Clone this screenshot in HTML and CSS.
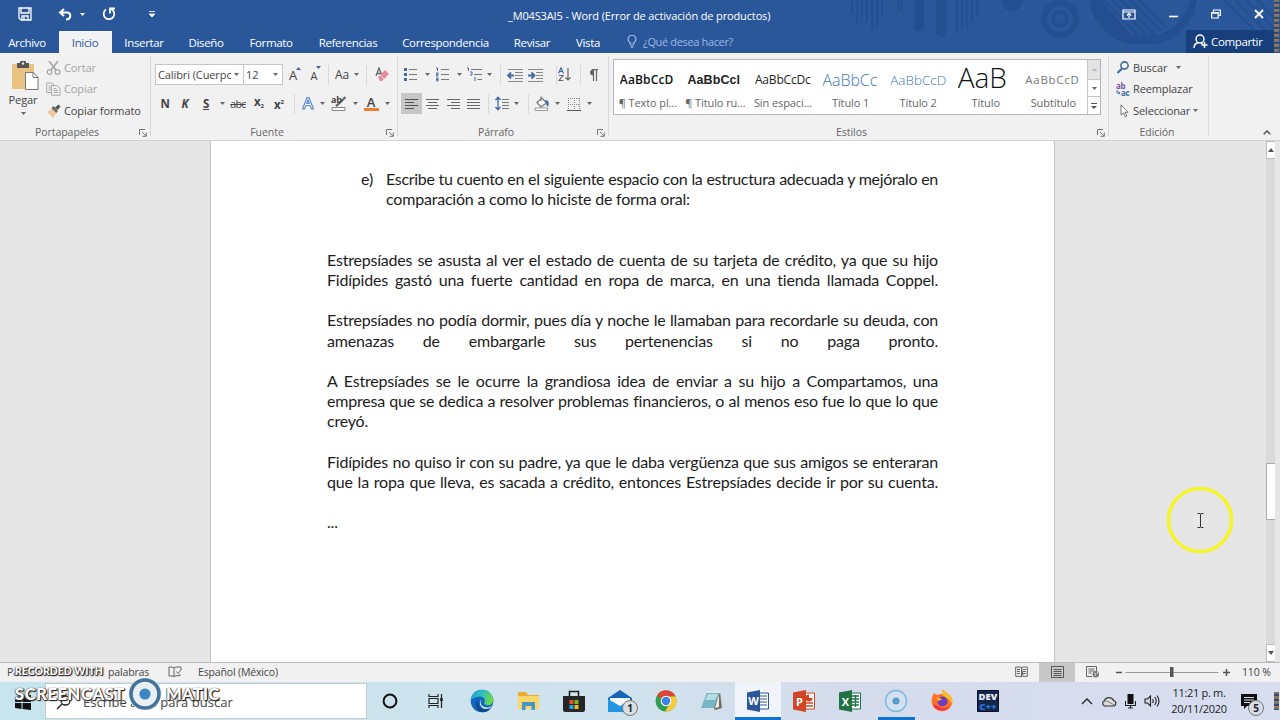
FILE: index.html
```html
<!DOCTYPE html>
<html lang="es">
<head>
<meta charset="utf-8">
<title>_M04S3AI5 - Word</title>
<link rel="stylesheet" href="styles.css">
</head>
<body>
<svg class="defs" width="0" height="0">
  <symbol id="caret" viewBox="0 0 5 3"><path d="M0 0h5L2.500 3z" fill="#666"/></symbol>
  <symbol id="launch" viewBox="0 0 8 8"><path d="M.5 6V.5H6M3 3l4 4M7.300 3.500v3.800H3.500" fill="none" stroke="#777"/></symbol>
</svg>
<div class="app">
  <header class="top">
    <svg class="pattern" width="440" height="53" viewBox="835 0 440 53">
      <g stroke="#234f90" stroke-width="2" fill="none"><path d="M852 0v14M857 0v24M862 0v19M867 0v22M872 0v30M877 0v26M882 0v15M957 0v32M962 0v30M967 0v27M972 0v22M977 0v16"/></g>
      <path d="M900 0v11" stroke="#265292" stroke-width="6"/><path d="M919 0v26M941 0v32" stroke="#234e8f" stroke-width="10" stroke-linecap="round"/>
      <circle cx="1012" cy="0" r="11" fill="#234e8f"/>
      <circle cx="1060" cy="19" r="16" fill="none" stroke="#244f90" stroke-width="6"/><circle cx="1060" cy="19" r="7" fill="none" stroke="#244f90" stroke-width="4"/>
      <path d="M1089 0a52 52 0 0 0 40 44h28a52 52 0 0 0 40-44h-7a45 45 0 0 1-33 35h-26L1101 0z" fill="#234e8f"/>
      <path d="M1103 0l40 40M1112 0l37 38M1121 0l34 35M1130 0l31 31M1139 0l28 28M1224 0l50 50M1235 0l40 40M1246 0l29 29M1257 0l18 18" stroke="#255091" stroke-width="3"/>
    </svg>
    <div class="titlebar">
      <div class="quick">
        <svg width="14" height="14" viewBox="0 0 14 14"><path d="M1 1h12v12H3L1 11zM3 1v5h8V1M4 13V9h6v4M6 10v3" fill="none" stroke="#fff" stroke-width="1.300"/></svg>
        <svg width="14" height="13" viewBox="0 0 14 13"><path d="M6 1L2 4.500 6 8M2 4.500h7c5 0 4 7-1 7" fill="none" stroke="#fff" stroke-width="2"/></svg>
        <svg width="5" height="3" viewBox="0 0 5 3"><path d="M0 0h5L2.500 3z" fill="#fff"/></svg>
        <svg width="14" height="14" viewBox="0 0 14 14"><path d="M4 2.500A5.300 5.300 0 1 0 9.500 2.200M8 6.500V1.500h5" fill="none" stroke="#fff" stroke-width="1.800"/></svg>
        <svg width="6" height="6" viewBox="0 0 6 6"><path d="M0 .5h6M0 3h6L3 6z" stroke="#fff" stroke-width=".8" fill="#fff"/></svg>
      </div>
      <h1 class="title">_M04S3AI5 - Word (Error de activación de productos)</h1>
      <div class="winbtns">
        <svg width="14" height="11" viewBox="0 0 14 11"><path d="M1 1h12v9H1zM1 3h12M7 9V4.500M4.800 6.500L7 4.300l2.200 2.200" fill="none" stroke="#fff" stroke-width="1.200"/></svg>
        <svg width="9" height="11" viewBox="0 0 9 11"><path d="M0 7.500h9" stroke="#fff" stroke-width="1.600"/></svg>
        <svg width="10" height="10" viewBox="0 0 10 10"><path d="M.7 3.500h6.500V9H.7zM2.500 3V1h6.800v5.500H7.500M.7 4.200h6.500" fill="none" stroke="#fff" stroke-width="1.200"/></svg>
        <svg width="10" height="10" viewBox="0 0 10 10"><path d="M1 1l8 8M9 1L1 9" stroke="#fff" stroke-width="1.900"/></svg>
      </div>
    </div>
    <nav class="tabs">
      <span class="tab">Archivo</span><span class="tab active">Inicio</span><span class="tab">Insertar</span><span class="tab">Diseño</span><span class="tab">Formato</span><span class="tab">Referencias</span><span class="tab">Correspondencia</span><span class="tab">Revisar</span><span class="tab">Vista</span>
      <span class="tell"><svg width="10" height="13" viewBox="0 0 10 13"><path d="M3 9V7.500a3.900 3.900 0 1 1 4 0V9zM3 11h4M4 12.500h2" fill="none" stroke="#9db8e0" stroke-width="1.200"/></svg>¿Qué desea hacer?</span>
      <span class="share"><svg width="15" height="15" viewBox="0 0 15 15"><circle cx="7" cy="5" r="4" fill="none" stroke="#fff" stroke-width="1.400"/><path d="M1 14c0-3 2-5 4.500-5.300M8 9l1.500 1M11.500 8v6M8.500 11h6" fill="none" stroke="#fff" stroke-width="1.400"/></svg>Compartir</span>
      <i class="glitch"></i>
    </nav>
  </header>

  <section class="ribbon">
    <div class="group g-clip">
      <div class="paste">
        <svg width="28" height="30" viewBox="0 0 28 30"><path d="M1 3h22v25H1z" fill="#eac282"/><path d="M6 2h3a3 3 0 0 1 6 0h3v5H6z" fill="#555"/><circle cx="12" cy="2.500" r="1.200" fill="#eee"/><path d="M14.500 11.500h8l4.500 5v12H14.500z" fill="#fff" stroke="#777"/><path d="M22 11.500v5h5" fill="none" stroke="#777"/></svg>
        <span>Pegar</span>
        <svg class="caret"><use href="#caret"/></svg>
      </div>
      <div class="cliplist">
        <div class="off"><svg width="16" height="14" viewBox="0 0 16 14"><path d="M3 0l7 9M12 0L5 9" stroke="#a8a8a8" stroke-width="1.800"/><circle cx="3.500" cy="11" r="2.300" fill="none" stroke="#a8a8a8" stroke-width="1.300"/><circle cx="11.500" cy="11" r="2.300" fill="none" stroke="#a8a8a8" stroke-width="1.300"/></svg>Cortar</div>
        <div class="off"><svg width="16" height="14" viewBox="0 0 16 14"><path d="M5 10.500H.7V1H6l2 2M5.500 3.500H11l3 3v6.800H5.500zM2.500 4h2M2.500 6h2M2.500 8h2M7.500 6.500h3M7.500 8.500h4.500M7.500 10.500h4.500" fill="none" stroke="#aaa"/></svg>Copiar</div>
        <div><svg width="16" height="14" viewBox="0 0 16 14"><path d="M1 8l5-3.500L10.500 9 7 14z" fill="#f0c79a"/><path d="M5.500 4l2-2L12 7l-1.700 2z" fill="#666"/><path d="M9 3.500L12.500.5l2 2L11.500 6z" fill="#555"/></svg>Copiar formato</div>
      </div>
      <div class="glabel">Portapapeles</div><svg class="launch"><use href="#launch"/></svg>
    </div>

    <div class="group g-font">
      <div class="row font1">
        <div class="combo"><span class="cut">Calibri (Cuerpo)</span><svg class="caret"><use href="#caret"/></svg></div>
        <div class="combo"><span>12</span><svg class="caret"><use href="#caret"/></svg></div>
        <span class="grow">A<svg width="5" height="3" viewBox="0 0 5 3"><path d="M0 3h5L2.500 0z" fill="#41699f"/></svg></span>
        <span class="grow small">A<svg width="5" height="3" viewBox="0 0 5 3"><path d="M0 0h5L2.500 3z" fill="#41699f"/></svg></span>
        <i class="sep"></i>
        <span class="aa">Aa</span><svg class="caret"><use href="#caret"/></svg>
        <i class="sep"></i>
        <svg width="14" height="15" viewBox="0 0 14 15"><path d="M1 9l3-8 3 8M2 6.500h4" fill="none" stroke="#666" stroke-width="1.300"/><path d="M3 10l7-7 4 4-7 7H5z" fill="#e58a9b"/><path d="M5 8l4 4" stroke="#fff" stroke-width=".8"/></svg>
      </div>
      <div class="row font2">
        <b>N</b><b><i>K</i></b><b><u>S</u></b><svg class="caret"><use href="#caret"/></svg><s>abc</s><b class="sub">x<small>2</small></b><b class="sup">x<small>2</small></b><i class="sep"></i>
        <svg width="14" height="15" viewBox="0 0 14 15"><path d="M1.500 13L6 1.500h2L12.500 13h-2L9 9.500H5L3.500 13zM5.700 7.500h2.600L7 4z" fill="#fff" stroke="#5b8bc9" stroke-width="1.200"/></svg><svg class="caret"><use href="#caret"/></svg>
        <span class="marker"><em>ab</em><svg width="16" height="15" viewBox="0 0 16 15"><path d="M14.500 1L7 8.500l-2 1.500" stroke="#666" stroke-width="2.200" fill="none"/><path d="M1 11.500h13v3H1z" fill="#fff" stroke="#888"/></svg></span><svg class="caret"><use href="#caret"/></svg>
        <span class="acolor">A</span><svg class="caret"><use href="#caret"/></svg>
      </div>
      <div class="glabel">Fuente</div><svg class="launch"><use href="#launch"/></svg>
    </div>

    <div class="group g-para">
      <div class="row para1">
        <svg width="14" height="15" viewBox="0 0 14 15"><path d="M0 1h3v3H0zM0 6h3v3H0zM0 11h3v3H0z" fill="#41699f"/><path d="M5 2.500h8M5 7.500h8M5 12.500h8" stroke="#777"/></svg><svg class="caret"><use href="#caret"/></svg>
        <svg width="14" height="15" viewBox="0 0 14 15"><path d="M0 1h1.500v3M0 6h2v1.500H0V9h2.500M0 11h2v3H0M0 12.500h2" fill="none" stroke="#41699f"/><path d="M5 2.500h8M5 7.500h8M5 12.500h8" stroke="#777"/></svg><svg class="caret"><use href="#caret"/></svg>
        <svg width="16" height="15" viewBox="0 0 16 15"><path d="M0 1h1.500v3M3 5h2v3H3M8 10v4" fill="none" stroke="#41699f"/><path d="M4 2.500h11M7 7.500h8M10.500 12.500H15" stroke="#777"/></svg><svg class="caret"><use href="#caret"/></svg>
        <i class="sep"></i>
        <svg width="16" height="14" viewBox="0 0 16 14"><path d="M1 1.500h15M8 4.500h8M8 7.500h8M8 10.500h8M1 13.500h15" stroke="#888"/><path d="M7 7.500H1.500M4 4.500l-3 3 3 3" stroke="#41699f" stroke-width="1.800" fill="none"/></svg>
        <svg width="16" height="14" viewBox="0 0 16 14"><path d="M0 1.500h15M8 4.500h7M8 7.500h7M8 10.500h7M0 13.500h15" stroke="#888"/><path d="M0 7.500h6M3.500 4.500l3 3-3 3" stroke="#41699f" stroke-width="1.800" fill="none"/></svg>
        <i class="sep"></i>
        <svg width="13" height="15" viewBox="0 0 13 15"><path d="M.5 6.500L3 .8l2.500 5.700M1.300 4.500h3.400" fill="none" stroke="#41699f" stroke-width="1.200"/><path d="M1 8.500h4L1 13.500h4.300M10 1v12M7.500 10.500L10 13l2.500-2.500" fill="none" stroke="#666" stroke-width="1.200"/></svg>
        <i class="sep"></i>
        <svg width="11" height="12" viewBox="0 0 11 12"><path d="M5 6.500a3 3 0 0 1 0-6z" fill="#666"/><path d="M4 .7h6M5.500 1v11M8.500 1v11" stroke="#666" stroke-width="1.200"/></svg>
      </div>
      <div class="row para2">
        <span class="pressed"><svg width="13" height="12" viewBox="0 0 13 12"><path d="M0 1.500h13M0 4.500h9M0 7.500h13M0 10.500h9" stroke="#555"/></svg></span>
        <svg width="13" height="12" viewBox="0 0 13 12"><path d="M0 1.500h13M2 4.500h9M0 7.500h13M2 10.500h9" stroke="#666"/></svg>
        <svg width="13" height="12" viewBox="0 0 13 12"><path d="M0 1.500h13M4 4.500h9M0 7.500h13M4 10.500h9" stroke="#666"/></svg>
        <svg width="13" height="12" viewBox="0 0 13 12"><path d="M0 1.500h13M0 4.500h13M0 7.500h13M0 10.500h13" stroke="#666"/></svg>
        <i class="sep"></i>
        <svg width="14" height="15" viewBox="0 0 14 15"><path d="M3 1v13M.5 4L3 1.200 5.500 4M.5 11L3 13.800 5.500 11" stroke="#41699f" stroke-width="1.300" fill="none"/><path d="M7 3.500h7M7 6.500h7M7 9.500h7M7 12.500h7" stroke="#777"/></svg><svg class="caret"><use href="#caret"/></svg>
        <i class="sep"></i>
        <svg width="16" height="15" viewBox="0 0 16 15"><path d="M3 6.500L8 2l4.500 5L7 11zM7 5V.5" fill="#fff" stroke="#777" stroke-width="1.200"/><path d="M11 4c4 0 4.500 3 3 7-1-1-2.500-3-1.500-4z" fill="#41699f"/><path d="M1 12h12.500v2.500H1z" fill="#fff" stroke="#999"/></svg><svg class="caret"><use href="#caret"/></svg>
        <svg width="14" height="14" viewBox="0 0 14 14"><path d="M1 1.500h12M1 7.500h12M1.500 1v12M7.500 1v12M12.500 1v12" stroke="#888" stroke-dasharray="1 1"/><path d="M0 13.500h14" stroke="#555"/></svg><svg class="caret"><use href="#caret"/></svg>
      </div>
      <div class="glabel">Párrafo</div><svg class="launch"><use href="#launch"/></svg>
    </div>

    <div class="group g-styles">
      <div class="gallery">
        <div class="style"><span class="sample s1">AaBbCcD</span><span>¶ Texto pl...</span></div>
        <div class="style"><span class="sample s2">AaBbCcl</span><span>¶ Titulo ru...</span></div>
        <div class="style"><span class="sample s3">AaBbCcDc</span><span>Sin espaci...</span></div>
        <div class="style"><span class="sample s4">AaBbCc</span><span>Título 1</span></div>
        <div class="style"><span class="sample s5">AaBbCcD</span><span>Título 2</span></div>
        <div class="style"><span class="sample s6">AaB</span><span>Título</span></div>
        <div class="style"><span class="sample s7">AaBbCcD</span><span>Subtítulo</span></div>
        <div class="gscroll">
          <i class="dim"><svg width="5" height="3" viewBox="0 0 5 3"><path d="M0 3h5L2.500 0z" fill="#bbb"/></svg></i>
          <i><svg class="caret"><use href="#caret"/></svg></i>
          <i><svg width="6" height="6" viewBox="0 0 6 6"><path d="M0 .5h6" stroke="#555"/><path d="M0 3h6L3 6z" fill="#555"/></svg></i>
        </div>
      </div>
      <div class="glabel">Estilos</div><svg class="launch"><use href="#launch"/></svg>
    </div>

    <div class="group g-edit">
      <div class="editlist">
        <div><svg width="15" height="13" viewBox="0 0 15 13"><circle cx="8.500" cy="4.500" r="3.600" fill="#fff" stroke="#41699f" stroke-width="1.600"/><path d="M6 7.500L1.500 12" stroke="#41699f" stroke-width="2.200"/></svg><span class="w-b">Buscar</span><svg class="caret"><use href="#caret"/></svg></div>
        <div><span class="abac"><em>ab</em><em><svg width="5" height="5" viewBox="0 0 5 5"><path d="M1 0v3h3M2.500 1.500L4 3 2.500 4.500" fill="none" stroke="#41699f" stroke-width=".9"/></svg>ac</em></span><span>Reemplazar</span></div>
        <div><svg width="15" height="14" viewBox="0 0 15 14"><path d="M5 .8v10l2.500-2 1.800 4 1.500-.8-1.800-3.700H12z" fill="#fff" stroke="#777"/></svg><span class="w-s">Seleccionar</span><svg class="caret"><use href="#caret"/></svg></div>
      </div>
      <div class="glabel">Edición</div>
    </div>
    <div class="collapse"><svg width="8" height="5" viewBox="0 0 8 5"><path d="M.7 4.300L4 1l3.300 3.300" fill="none" stroke="#555" stroke-width="1.500"/></svg></div>
  </section>

  <main class="work">
    <article class="page">
      <div class="item"><span>e)</span><div><p class="full tight">Escribe tu cuento en el siguiente espacio con la estructura adecuada y mejóralo en</p><p>comparación a como lo hiciste de forma oral:</p></div></div>
      <div class="para first"><p class="full">Estrepsíades se asusta al ver el estado de cuenta de su tarjeta de crédito, ya que su hijo</p><p class="full">Fidípides gastó una fuerte cantidad en ropa de marca, en una tienda llamada Coppel.</p></div>
      <div class="para"><p class="full">Estrepsíades no podía dormir, pues día y noche le llamaban para recordarle su deuda, con</p><p class="full">amenazas de embargarle sus pertenencias si no paga pronto.</p></div>
      <div class="para"><p class="full">A Estrepsíades se le ocurre la grandiosa idea de enviar a su hijo a Compartamos, una</p><p class="full">empresa que se dedica a resolver problemas financieros, o al menos eso fue lo que lo que</p><p>creyó.</p></div>
      <div class="para"><p class="full">Fidípides no quiso ir con su padre, ya que le daba vergüenza que sus amigos se enteraran</p><p class="full">que la ropa que lleva, es sacada a crédito, entonces Estrepsíades decide ir por su cuenta.</p></div>
      <div class="para"><p>...</p></div>
    </article>
    <div class="vscroll">
      <i class="arrow"><svg width="6" height="4" viewBox="0 0 6 4"><path d="M0 4h6L3 0z" fill="#555"/></svg></i>
      <i class="thumb"></i>
      <i class="arrow"><svg width="6" height="4" viewBox="0 0 6 4"><path d="M0 0h6L3 4z" fill="#555"/></svg></i>
    </div>
    <svg class="pointer" width="68" height="68" viewBox="0 0 68 68"><circle cx="34" cy="34" r="31.500" fill="none" stroke="#f5f52c" stroke-width="3.600"/><path d="M31.500 27.500h2.500l.5.500.5-.5h2.500M31.500 41.500h2.500l.5-.5.5.5h2.500M34.500 28v13" fill="none" stroke="#333"/></svg>
  </main>

  <footer class="status">
    <span class="pg">Pá</span><span class="words">palabras</span>
    <svg class="proof" width="14" height="12" viewBox="0 0 14 12"><path d="M6 10.500V2L4 1H1v9h3zM6 2l2-1h5v2M6 10.500l2-.8h4V8M8.500 5.500l1.700 2L13.500 3" fill="none" stroke="#666"/></svg>
    <span class="lang">Español (México)</span>
    <div class="views">
      <span><svg width="13" height="12" viewBox="0 0 13 12"><path d="M6.500 11V1.500L5 1H.7v9.300H5zM6.500 1.500L8 1h4.300v9.300H8zM2 3.500h3M2 5.500h3M2 7.500h3M8 3.500h3M8 5.500h3M8 7.500h3" fill="none" stroke="#666"/></svg></span>
      <span class="on"><svg width="13" height="12" viewBox="0 0 13 12"><path d="M.5.500h12v11H.5zM2.500 3.500h8M2.500 5.500h8M2.500 7.500h8M2.500 9.500h8" fill="none" stroke="#555"/></svg></span>
      <span><svg width="14" height="12" viewBox="0 0 14 12"><path d="M6 10.500H.5V.5h10V5M2.500 3h6M2.500 5h6M2.500 7h3" fill="none" stroke="#666"/><circle cx="9.800" cy="8.300" r="3.200" fill="#777"/><path d="M8 7l2 1-1 2M11 6l1 2" stroke="#eee" fill="none" stroke-width=".8"/></svg></span>
    </div>
    <svg class="zoom" width="116" height="12" viewBox="0 0 116 12"><path d="M1 6.500h6M108 6.500h7M111.500 3v7" stroke="#555" stroke-width="1.500"/><path d="M10.500 6.500h93" stroke="#999"/><path d="M55 1h3.500v10H55z" fill="#555"/></svg>
    <span class="pct">110 %</span>
  </footer>

  <footer class="taskbar">
    <div class="start"><svg width="16" height="15" viewBox="0 0 16 15"><path d="M0 2l6.500-1v6H0zM7.500 1L16 0v7H7.500zM0 8h6.500v6L0 13zM7.500 8H16v7l-8.500-1z" fill="#111"/></svg></div>
    <div class="search"><svg width="15" height="15" viewBox="0 0 15 15"><circle cx="9.500" cy="5.500" r="4.500" fill="none" stroke="#222" stroke-width="1.300"/><path d="M6 9L1 14" stroke="#222" stroke-width="1.400"/></svg><span>Escribe aquí para buscar</span></div>
    <div class="apps">
      <span><svg width="16" height="16" viewBox="0 0 16 16"><circle cx="8" cy="8" r="6.400" fill="none" stroke="#111" stroke-width="2"/></svg></span>
      <span><svg width="16" height="14" viewBox="0 0 16 14"><path d="M1 0v2.500h9V0M1 14v-2.500h9V14M1 4.500h9v5H1zM13.500 0v14" fill="none" stroke="#222" stroke-width="1.200"/><path d="M12.200 4h2.600v3h-2.600z" fill="#222"/></svg></span>
      <span><svg width="24" height="24" viewBox="0 0 24 24"><defs><linearGradient id="eg" x1="0" y1="0" x2="1" y2=".4"><stop offset="0" stop-color="#1c9de0"/><stop offset=".5" stop-color="#2ebfc0"/><stop offset="1" stop-color="#66d64e"/></linearGradient></defs><circle cx="12" cy="12" r="11.300" fill="#1366bd"/><path d="M1 11C2 4 7 .7 12 .7 19 .7 23.300 6 23.300 11c0 4-4 6-7 5-3-1-2-2-1.500-4C15 8 9 5 1 11z" fill="url(#eg)"/><path d="M8.500 11c-2 5 3 11 12 8.500-3 4-8 4.500-11 3C5 20 5 13 8.500 11z" fill="#114a8b"/><path d="M12 9.500c-3 3-1 9 5 9 2 0 4-.7 5-1.500-1 2-4 3-6 3-6 0-8-7-4-10.500z" fill="#d6eaf3"/></svg></span>
      <span><svg width="21" height="18" viewBox="0 0 21 18"><path d="M0 0h8l2 3h11v14H0z" fill="#e6ad32"/><path d="M0 4h21v13H0z" fill="#fbd768"/><path d="M4 18V10h13v8h-3.500v-4h-6v4z" fill="#4694c8"/></svg></span>
      <span><svg width="22" height="23" viewBox="0 0 22 23"><path d="M6.500 7V1.500h9V7" fill="none" stroke="#222" stroke-width="1.600"/><path d="M0 6h22v14q0 2-2 2H2q-2 0-2-2z" fill="#262626"/><path d="M6.500 10h4v4h-4z" fill="#e8502a"/><path d="M11.500 10h4v4h-4z" fill="#7bb829"/><path d="M6.500 15h4v4h-4z" fill="#1ba1e8"/><path d="M11.500 15h4v4h-4z" fill="#fcbb14"/></svg></span>
      <span class="badged"><svg width="24" height="23" viewBox="0 0 24 23"><path d="M0 8L12 0l12 8v14H0z" fill="#1266b4"/><path d="M2 8h20v6l-10 6L2 14z" fill="#f5f8fb"/><path d="M0 9l12 7 12-7v13H0z" fill="#2496e0"/></svg><i>1</i></span>
      <span><svg width="22" height="22" viewBox="0 0 22 22"><circle cx="11" cy="11" r="10.500" fill="#2f9e4e"/><path d="M11 11L1.900 5.700A10.500 10.500 0 0 1 20.600 6.500H11z" fill="#dc4538"/><path d="M11 6.500h9.500A10.500 10.500 0 0 1 10 21.500l5-8z" fill="#f8cb38"/><circle cx="11" cy="11" r="5.300" fill="#fff"/><circle cx="11" cy="11" r="4.200" fill="#4083eb"/></svg></span>
      <span><svg width="22" height="20" viewBox="0 0 22 20"><path d="M6 1h13l-5 16H0z" fill="#76b7c3"/><path d="M7 3h10l-3 6H4z" fill="#b4dde3"/><path d="M19 1l2 16-7 2-1-2z" fill="#766e5c"/><path d="M18 4l-4 13 4-1z" fill="#eee"/><path d="M6 1h13" stroke="#dfe9eb" stroke-width="2"/></svg></span>
      <span class="cur"><svg class="office" width="22" height="22" viewBox="0 0 22 22"><path d="M10 3h11.500v16H10z" fill="#fff" stroke="#2a5699"/><path d="M13 6h7M13 9h7M13 12h7M13 15h7" stroke="#2a5699" stroke-width="1.200"/><path d="M0 2.500L13 0v22L0 19.500z" fill="#2a5699"/><text x="6.500" y="15">W</text></svg></span>
      <span><svg class="office" width="22" height="22" viewBox="0 0 22 22"><path d="M10 3h11.500v16H10z" fill="#fff" stroke="#d04526"/><path d="M13 13h7M13 16h7" stroke="#d04526" stroke-width="1.400"/><circle cx="16" cy="8" r="3.500" fill="#d04526"/><path d="M16 8V4.500A3.500 3.500 0 0 1 19.500 8z" fill="#fff"/><path d="M0 2.500L13 0v22L0 19.500z" fill="#d04526"/><text x="6.500" y="15.500">P</text></svg></span>
      <span><svg class="office" width="22" height="22" viewBox="0 0 22 22"><path d="M10 3h11.500v16H10z" fill="#fff" stroke="#207245"/><path d="M13 6h7M13 9h7M13 12h7M13 15h7M16.500 5v12" stroke="#207245" stroke-width="1.400"/><path d="M0 2.500L13 0v22L0 19.500z" fill="#207245"/><text x="6.500" y="15.500">X</text></svg></span>
      <span class="run"><svg width="24" height="24" viewBox="0 0 24 24"><circle cx="12" cy="12" r="10.500" fill="#d0e2f2" stroke="#7db7dc" stroke-width="1.300"/><circle cx="12" cy="12" r="3.600" fill="#579fcf"/></svg></span>
      <span><svg width="22" height="22" viewBox="0 0 22 22"><path d="M3 3l3 2c2-1 3-1 5-1V0c3 1 5 2 6 5l1-1c3 3 4 7 3 10a10.500 10.500 0 0 1-20 0C0 10 1 6 3 3z" fill="#fb7324"/><path d="M11 0c3 1 5 2 6 5l1-1c3 3 4 7 3 10-3-6-7-6-10-10z" fill="#fdbd28"/><path d="M2 14a9.500 9.500 0 0 0 17 2c-4 3-9 3-12 0z" fill="#f23050"/><circle cx="11.500" cy="11.500" r="5" fill="#6a3ebc"/><path d="M5 8c3-1 5 0 6 2-2 0-3 1-4 1z" fill="#fdab28"/></svg></span>
      <span><svg class="dev" width="22" height="22" viewBox="0 0 22 22"><path d="M.5.500h21v21H.5z" fill="#16264a" stroke="#0a1024"/><text x="11" y="10" fill="#e8edf5">DEV</text><text x="11" y="20" fill="#2478e0">C++</text></svg></span>
    </div>
    <div class="tray">
      <svg width="12" height="7" viewBox="0 0 12 7"><path d="M1 6l5-5 5 5" fill="none" stroke="#222" stroke-width="1.300"/></svg>
      <svg width="16" height="11" viewBox="0 0 16 11"><path d="M3.500 10a3 3 0 0 1 0-5.500 5 5 0 0 1 9 0 2.800 2.800 0 0 1 0 5.500z" fill="#ddd" stroke="#333" stroke-width="1.200"/><path d="M2 6c3-2 6 0 11 3" stroke="#777" fill="none"/></svg>
      <svg width="11" height="15" viewBox="0 0 11 15"><path d="M2.500 0h6v10h-6z" fill="#111"/><path d="M.5 7v4.500h10V7M5.500 11v3M3 14h5" fill="none" stroke="#222" stroke-width="1.100"/></svg>
      <svg width="16" height="14" viewBox="0 0 16 14"><path d="M1 5h2.500L6.500 2v10L3.500 9H1zM8.500 5q1.500 2 0 4M10.700 3q3 4 0 8M13 1.500q4 5.500 0 11" fill="none" stroke="#222" stroke-width="1.100"/></svg>
      <div class="clock"><span>11:21 p. m.</span><span>20/11/2020</span></div>
      <span class="badged note"><svg width="16" height="15" viewBox="0 0 16 15"><path d="M0 0h16v12H6l-3 3v-3H0z" fill="#111"/><path d="M3 3.500h10M3 6h10M3 8.500h6" stroke="#dde" stroke-width="1"/></svg><i>5</i></span>
      <i class="glitch low"></i>
    </div>
    <div class="watermark">
      <span class="rec">RECORDED WITH</span>
      <div class="brand"><span class="sc">SCREENCAST</span><svg width="34" height="34" viewBox="0 0 34 34"><circle cx="17" cy="17" r="13.500" fill="#e9eef2" stroke="#e8eef3" stroke-width="6"/><circle cx="17" cy="17" r="14" fill="none" stroke="#44739b" stroke-width="3.600"/><circle cx="17" cy="17" r="5.600" fill="#3b86c4"/></svg><span class="ma">MATIC</span></div>
    </div>
  </footer>
</div>
</body>
</html>
```
FILE: styles.css
```css
* { box-sizing: border-box; }
body { margin: 0; font: 11px/14px "Open Sans", "Noto Sans", sans-serif; color: #444; }
p, h1 { margin: 0; font: inherit; }
svg { display: block; flex: none; }
.defs { position: absolute; }
.app { width: 1280px; height: 720px; overflow: hidden; display: grid; grid-template-rows: 53px 88px 521px 20px 38px; background: #e6e6e6; }
.caret { width: 5px; height: 3px; }

.top { position: relative; background: #2a579a; color: #fff; display: grid; grid-template-rows: 30px 23px; }
.pattern { position: absolute; left: 835px; top: 0; }
.titlebar { position: relative; display: grid; grid-template-columns: 508px 1fr 170px; align-items: center; }
.quick { display: flex; align-items: center; padding: 0 0 2px 18px; }
.quick svg:nth-child(2) { margin-left: 26px; }
.quick svg:nth-child(3) { margin-left: 8px; }
.quick svg:nth-child(4) { margin-left: 17px; }
.quick svg:nth-child(5) { margin-left: 33px; }
.title { font-size: 11px; letter-spacing: -.14px; white-space: nowrap; padding-top: 2px; }
.winbtns { display: flex; align-items: center; padding: 0 0 2px 12px; gap: 33px; }
.tabs { position: relative; display: flex; font-size: 11.500px; line-height: 25px; letter-spacing: -.35px; white-space: nowrap; }
.tab { display: flex; justify-content: center; flex: none; width: 58px; }
.tab:nth-child(1) { padding-right: 4px; }
.tab:nth-child(2) { width: 53px; background: #f3f3f4; color: #2a579a; height: 24px; margin: 1px 1px 0; line-height: 23px; padding-right: 1px; }
.tab:nth-child(3) { width: 62px; }
.tab:nth-child(4) { width: 62px; }
.tab:nth-child(5) { width: 68px; }
.tab:nth-child(6) { width: 86px; }
.tab:nth-child(7) { width: 109px; }
.tab:nth-child(8) { width: 64px; }
.tab:nth-child(9) { width: 48px; }
.tell { display: flex; align-items: center; gap: 6px; margin-left: 15px; color: #9db8e0; font-size: 11px; width: 559px; flex: none; }
.share { display: flex; align-items: center; gap: 3px; padding-left: 7px; width: 88px; flex: none; background: #173f7c; }
.glitch { flex: none; width: 5px; height: 53px; margin-top: -30px; background: repeating-linear-gradient(#9a6a62 0 1px, #5d7f6c 1px 2px, #3b4668 2px 4px, #8f7d5b 4px 5px); }

.ribbon { display: flex; background: #f1f1f1; border-bottom: 1px solid #d2d2d2; }
.group { position: relative; height: 80px; margin-top: 3px; border-right: 1px solid #d8d8d8; flex: none; letter-spacing: -.1px; white-space: nowrap; }
.glabel { position: absolute; left: 0; right: 14px; top: 69px; text-align: center; color: #666; font-size: 10.500px; letter-spacing: -.05px; }
.launch { position: absolute; right: 3px; top: 73px; width: 8px; height: 8px; }
.g-clip { width: 151px; display: flex; }
.g-clip .glabel { right: 16px; }
.paste { width: 46px; display: flex; flex-direction: column; align-items: center; padding-top: 5px; color: #444; }
.paste > svg:first-child { margin-left: 4px; }
.paste span { line-height: 18px; }
.paste .caret { margin-top: 3px; }
.cliplist { height: 67px; display: grid; grid-template-rows: repeat(3, 21.500px); padding-top: 1px; }
.cliplist div { display: flex; align-items: center; gap: 2px; }
.off { color: #a3a3a3; }
.row { display: grid; align-items: center; justify-items: center; height: 29px; }
.sep { width: 1px; height: 20px; background: #d9d9d9; }
.g-font { width: 247px; padding: 4px 0 0 4px; }
.font1 { grid-template-columns: 88px 40px 20px 22px 6px 22px 6px 14px 18px; }
.font1 .combo:first-child { border-right: 0; }
.combo { width: 100%; height: 21px; background: #fff; border: 1px solid #c6c6c6; display: flex; align-items: center; justify-content: space-between; padding: 0 4px 0 2px; }
.cut { width: 73px; overflow: hidden; }
.grow { position: relative; font-size: 13px; }
.grow svg { position: absolute; top: -1px; right: -4px; }
.small { font-size: 11px; padding-top: 2px; }
.aa { font-size: 12px; }
.font2 { grid-template-columns: 20px 20px 22px 10px 22px 20px 20px 10px 18px 10px 24px 8px 24px 8px; font-size: 11.500px; }
.font2 s { font-size: 10.500px; letter-spacing: -.6px; }
.font2 small { font-size: 6px; }
.sub small { vertical-align: -2px; }
.sup small { vertical-align: 5px; }
.marker { position: relative; }
.marker em { position: absolute; left: 0; top: -2px; font: bold 9px/12px "Open Sans", sans-serif; }
.acolor { font-weight: 600; font-size: 13px; line-height: 12px; width: 15px; text-align: center; border-bottom: 3px solid #ed7d31; }
.g-para { width: 211px; padding: 4px 0 0 3px; }
.para1 { justify-items: end; justify-content: start; grid-template-columns: 17px 12px 20px 12px 21px 9px 9px 22px 21px 13px 14px 10px 18px; }
.para2 { justify-content: start; grid-template-columns: 21px 21px 20px 21px 9px 18px 11px 12px 16px 14px 19px 12px; }
.pressed { width: 21px; height: 21px; background: #c6c6c6; display: grid; place-items: center; }
.g-styles { width: 500px; padding: 3px 0 0 4px; }
.gallery { width: 488px; height: 56px; border: 1px solid #b8b4c4; background: #fff; display: grid; grid-template-columns: repeat(7, 67.600px) 13px; }
.style { display: grid; grid-template-rows: 36px 16px; justify-items: center; color: #666; overflow: hidden; }
.sample { width: 56px; overflow: hidden; height: 36px; color: #222; }
.style .s1 { font: 600 12px/40px "Open Sans"; color: #111; letter-spacing: .15px; }
.style .s2 { font: bold 12.500px/40px "Liberation Sans"; letter-spacing: .1px; }
.style .s3 { font-size: 12px; line-height: 40px; letter-spacing: -.2px; }
.style .s4 { font: 300 16px/40px "Open Sans"; color: #3f78ae; }
.style .s5 { font: 300 13.500px/40px "Open Sans"; color: #3f78ae; letter-spacing: 0; }
.style .s6 { font: 300 28px/34px "Open Sans"; color: #111; }
.style .s7 { font-size: 11.500px; line-height: 40px; letter-spacing: .7px; color: #777; }
.gscroll { border-left: 1px solid #c6c6c6; display: grid; grid-template-rows: 20px 17px 17px; }
.gscroll i { display: grid; place-items: center; border-bottom: 1px solid #c6c6c6; }
.gscroll i:last-child { border-bottom: 0; }
.dim { background: #e3e3e3; }
.g-edit { width: 100px; }
.g-edit .glabel { right: 3px; }
.editlist { padding: 1px 0 0 7px; height: 67px; display: grid; grid-template-rows: repeat(3, 21.500px); letter-spacing: -.12px; }
.editlist div { display: flex; align-items: center; gap: 2px; }
.w-b { width: 41px; }
.w-s { width: 58px; }
.abac { width: 15px; display: grid; }
.abac em { display: flex; align-items: center; font: bold 8px/7px "Open Sans", sans-serif; color: #41699f; letter-spacing: -.3px; }
.abac em:first-child { color: #7a58a0; }
.collapse { flex: 1; display: flex; justify-content: flex-end; align-items: flex-end; padding: 0 9px 5px 0; }

.work { position: relative; display: flex; padding: 0 0 0 210px; background: #e6e6e6; }
.page { width: 845px; background: #fff; border: solid #c4c4c4; border-width: 0 1px; padding: 28px 116px 0; font: 16px/20.200px Lato, "Open Sans", sans-serif; letter-spacing: -.2px; color: #1c1c1c; white-space: nowrap; }
.full { text-align: justify; text-align-last: justify; }
.tight { letter-spacing: -.3px; }
.item { display: grid; grid-template-columns: 25px 1fr; margin-left: 34px; }
.para { margin-top: 20.200px; }
.first { margin-top: 40.400px; }
.vscroll { margin-left: 211px; width: 9px; background: #dadada; display: grid; grid-template-rows: 18px 1fr 18px; }
.arrow { background: #fff; border: 1px solid #bbb; border-right: 0; display: grid; place-items: center; }
.thumb { margin-top: 304px; height: 57px; background: #fff; border: 1px solid #aaa; border-right: 0; }
.pointer { position: absolute; left: 1166px; top: 345px; }

.status { display: flex; align-items: center; background: #f1f1f1; border-top: 1px solid #bdbdbd; font-size: 10.500px; letter-spacing: -.15px; white-space: nowrap; padding-bottom: 1px; }
.pg { width: 102px; padding-left: 7px; }
.words { width: 66px; margin-left: 6px; }
.proof { margin-left: -6px; }
.lang { margin-left: 16px; width: 805px; }
.views { display: flex; }
.views span { width: 36px; height: 19px; display: grid; place-items: center; }
.views .on { background: #c8c8c8; }
.zoom { margin-left: 4px; }
.pct { margin-left: 11px; }

.taskbar { position: relative; display: flex; background: linear-gradient(90deg, #c6e5ee, #d0e2ed 50%, #d4dcec 65%, #d8ddf0); color: #222; white-space: nowrap; }
.start { width: 45px; padding: 13px 0 0 15px; }
.search { width: 322px; margin: 1px 0; background: #fff; border: 1px solid #c5ccd0; display: flex; align-items: center; gap: 12px; padding: 2px 0 0 10px; font-size: 13px; color: #444; letter-spacing: .05px; }
.apps { display: flex; width: 644px; }
.apps > span { position: relative; width: 46px; height: 38px; display: grid; place-items: center; }
.apps .cur { background: #f1f5fb; box-shadow: inset 0 -3px #0f74cf; }
.apps .run::after { content: ""; position: absolute; left: 5px; right: 4px; bottom: 0; height: 3px; background: #0f74cf; }
.office text { font: bold 11px "Open Sans"; fill: #fff; text-anchor: middle; }
.dev text { font: 800 9.500px "Open Sans"; text-anchor: middle; }
.badged { position: relative; }
.badged i { position: absolute; left: 25px; top: 18px; width: 16px; height: 16px; border: 1px solid #777; border-radius: 8px; background: #d6dde4; font: bold 10px/14px "Open Sans"; text-align: center; color: #222; }
.tray { display: flex; align-items: center; flex: 1; padding-left: 70px; gap: 8px; }
.clock { display: grid; width: 62px; font-size: 11px; line-height: 16px; justify-items: center; letter-spacing: -.3px; }
.note { margin-left: 3px; }
.note i { left: 7px; top: 6px; }
.low { height: 18px; margin: 0 0 0 9px; }
.watermark { position: absolute; left: 15px; top: -17px; color: #fff; font-family: Lato, sans-serif; font-weight: 900; text-shadow: 1px 1px 1px #222, 1px 0 1px #444, 0 1px 1px #555, -1px 0 1px #999; }
.rec { display: block; font-size: 10.500px; line-height: 13px; letter-spacing: 0; }
.brand { display: flex; align-items: center; margin-top: -1px; font-size: 16.500px; letter-spacing: .6px; }
.sc { width: 113px; }
.ma { margin-left: 4px; letter-spacing: .3px; }
```
